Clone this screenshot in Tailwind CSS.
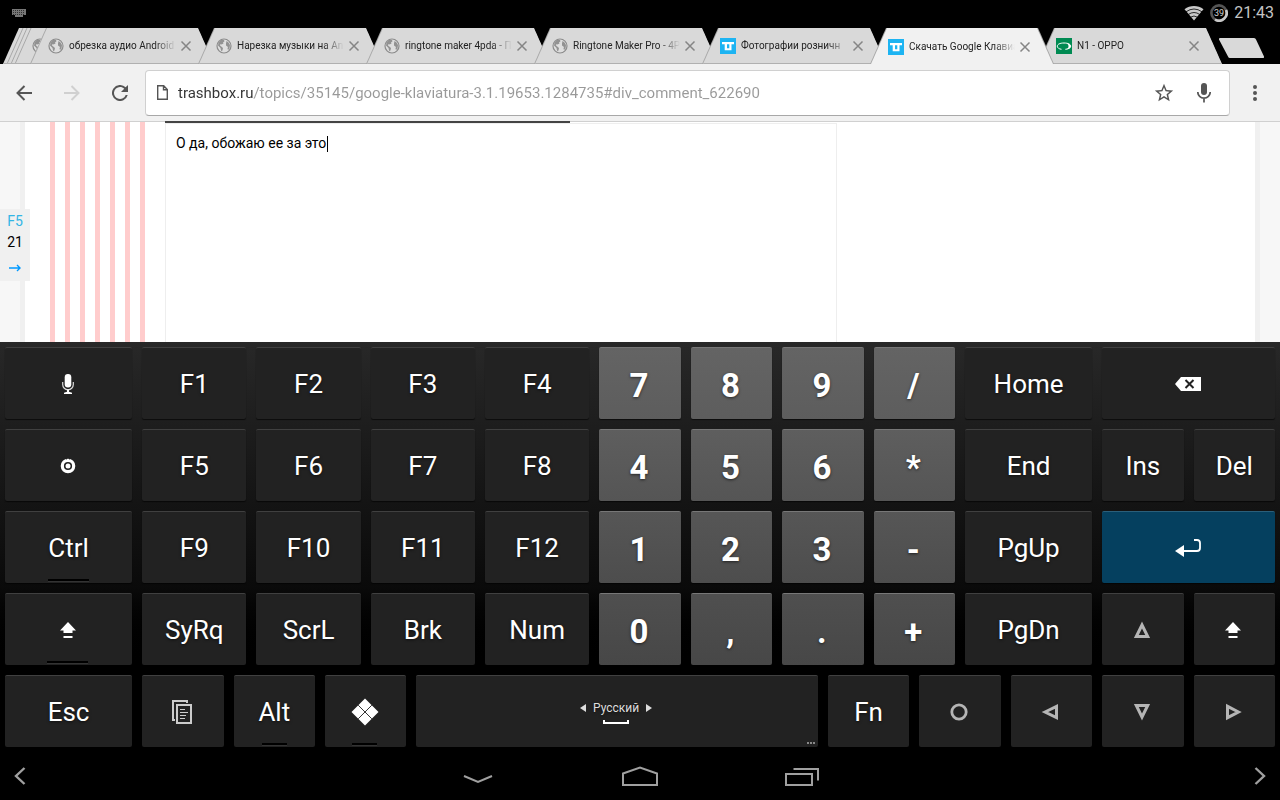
<!DOCTYPE html>
<html lang="ru">
<head>
    <meta charset="UTF-8">
    <meta name="viewport" content="width=device-width, initial-scale=1.0">
    <title>Скачать Google Клавиатура</title>
    <script src="https://cdn.jsdelivr.net/npm/@tailwindcss/browser@4"></script>
</head>
<body class="min-h-screen flex flex-col bg-black font-[Roboto,sans-serif] overflow-x-hidden">
    <!-- Icon sprites -->
    <svg class="hidden">
        <symbol id="globe" viewBox="0 0 16 16">
            <circle cx="8" cy="8" r="7" fill="#dedede" stroke="#8b8b8b" stroke-width="1.200"/>
            <path d="M2.500 4.500 5 1.800 8 2 8.500 3.200 7 4.500 7.500 5.500 5.500 6.500 4.500 6 4 7.500 6.500 9.500 7 10.500 6 13.500 5 12.500 4.500 10 2 7.500zM10.500 3 12.500 4.500 14 7 13.500 10.500 12 12 11.500 10.500 12 9 10 7.500 10 5.500z" fill="#929292"/>
        </symbol>
        <symbol id="trashbox" viewBox="0 0 16 16">
            <path d="M0 0h16v16H0z" fill="#1db4f2"/>
            <path d="M2 4h12v2.300h-2.500v6H4.700V6.300H2zM7 6.300v3.900h2.300V6.300z" fill="#fff" fill-rule="evenodd"/>
        </symbol>
        <symbol id="oppo" viewBox="0 0 16 16">
            <path d="M0 0h16v16H0z" fill="#008a52"/>
            <path d="M5.500 11.300C3 11 1.300 9.800 1.300 8.200 1.300 6.300 4 5 8 5s6.700 1.300 6.700 3.200c0 1.700-2.200 2.900-5.400 3.100" fill="none" stroke="#fff" stroke-width="1"/>
            <path d="M10 5.200c3 .3 4.900 1.300 4.900 3s-1.900 2.800-4.900 3.100c2-.7 2.500-1.900 2.500-3.100s-.5-2.300-2.500-3z" fill="#fff"/>
        </symbol>
        <symbol id="close" viewBox="0 0 12 12"><path d="M1.500 1.500l9 9M10.500 1.500l-9 9" stroke="#858585" stroke-width="1.500"/></symbol>
        <symbol id="key-mic" viewBox="0 0 12 20">
            <rect x="2.700" y="0" width="6.600" height="13.500" rx="3.200" fill="#fff"/>
            <path d="M.7 8v2.500a5.300 5.300 0 0 0 10.600 0V8" fill="none" stroke="#ddd" stroke-width="1.200"/>
            <path d="M5 15.500h2v2.200l3 1V20H2v-1.300l3-1z" fill="#fff"/>
        </symbol>
        <symbol id="key-gear" viewBox="0 0 16 16">
            <circle cx="8" cy="8" r="5.700" fill="none" stroke="#fff" stroke-width="3.200"/>
            <path d="M5.500 0l1 1.500M10.500 0l-1 1.500" stroke="#222" stroke-width=".8"/>
            <circle cx="8" cy="8" r="2.500" fill="#fff"/>
        </symbol>
        <symbol id="key-shift" viewBox="0 0 16 16"><path d="M8 0l8 8.500h-3.500V11h-9V8.500H0zM3.500 14h9v2h-9z" fill="#fff"/></symbol>
        <symbol id="key-menu" viewBox="0 0 20 24">
            <path d="M3 20H1V1h14v2" fill="none" stroke="#ccc" stroke-width="2"/>
            <path d="M5 5h14v18H5z" fill="none" stroke="#ccc" stroke-width="2"/>
            <path d="M8 9.500h5M8 12.500h8M8 15.500h6M8 18.500h5" stroke="#ccc"/>
        </symbol>
        <symbol id="key-meta" viewBox="0 0 28 28">
            <path d="M14 .5 27.500 14 14 27.500.5 14z" fill="#fff"/>
            <path d="M7.200 7.200l13.600 13.600M20.800 7.200 7.200 20.800" stroke="#333" stroke-width="1"/>
        </symbol>
        <symbol id="key-back" viewBox="0 0 26 14">
            <path d="M0 7 6 0h20v14H6z" fill="#fff"/>
            <path d="M10.500 3l8 8M18.500 3l-8 8" stroke="#222" stroke-width="2"/>
        </symbol>
        <symbol id="key-enter" viewBox="0 0 26 18">
            <path d="M0 12l9-6v12z" fill="#fff"/>
            <path d="M8 12h14q3 0 3-3V4q0-3-3-3h-3" fill="none" stroke="#fff" stroke-width="1.800"/>
        </symbol>
        <symbol id="key-circle" viewBox="0 0 18 18"><circle cx="9" cy="9" r="7.200" fill="none" stroke="#b5b5b5" stroke-width="2.800"/></symbol>
        <symbol id="key-up" viewBox="0 0 18 18"><path d="M9 4 14.700 15.500H3.300z" fill="none" stroke="#b5b5b5" stroke-width="3"/></symbol>
        <symbol id="key-down" viewBox="0 0 18 18"><path d="M9 14 14.700 2.500H3.300z" fill="none" stroke="#b5b5b5" stroke-width="3"/></symbol>
        <symbol id="key-left" viewBox="0 0 18 18"><path d="M4 9 15.500 3.300v11.400z" fill="none" stroke="#b5b5b5" stroke-width="3"/></symbol>
        <symbol id="key-right" viewBox="0 0 18 18"><path d="M14.500 9 3.500 3.300v11.400z" fill="none" stroke="#b5b5b5" stroke-width="3"/></symbol>
    </svg>

    <!-- Status bar -->
    <header class="h-7 flex items-start justify-between pt-px pl-3 pr-1.5 text-[#c4c4c4]">
        <svg class="w-[14px] h-[9px] mt-2" viewBox="0 0 14 9">
            <path d="M0 0h14v6h-3v2H3V6H0z" fill="#777"/>
            <path d="M1 1.500h12M1 3.500h12M1 5.500h12" stroke="#333" stroke-dasharray="1 1"/>
        </svg>
        <div class="flex items-center h-6 gap-1.5">
            <svg class="w-5 h-4" viewBox="0 0 20 16">
                <path d="M10 15.500.5 4.200C6 0 14 0 19.500 4.200z" fill="#c8c8c8"/>
                <path d="M2 6.800q8-5.600 16 0M4.200 9.500q5.800-4 11.600 0M6.500 12.200q3.500-2.400 7 0" fill="none" stroke="#000" stroke-width=".8"/>
            </svg>
            <svg class="w-[18px] h-[18px]" viewBox="0 0 18 18">
                <circle cx="9" cy="9" r="7.600" fill="none" stroke="#555" stroke-width="2.600"/>
                <path d="M16 6A7.600 7.600 0 0 1 5 15.500" fill="none" stroke="#c8c8c8" stroke-width="2.600"/>
                <text x="9" y="12" text-anchor="middle" font-size="9" fill="#d0d0d0">39</text>
            </svg>
            <span class="text-base leading-6">21:43</span>
        </div>
    </header>

    <!-- Tab strip -->
    <nav class="h-9 flex items-end">
        <svg class="w-[46px] h-9 shrink-0 -mr-4" viewBox="0 0 46 36">
            <path d="M3 36 19 0h27v36z" fill="#d9d9d9"/>
            <path d="M7 36 23 0M11 36 27 0M15 36 31 0" stroke="#a8a8a8" fill="none"/>
            <path d="M3 35.500h43" stroke="#b0b0b0"/>
            <use href="#globe" x="32" y="10" width="16" height="16"/>
        </svg>
        <ul id="tabs" class="flex flex-1 min-w-0"></ul>
        <button aria-label="Новая вкладка" class="w-[58px] h-9 shrink-0">
            <svg class="w-[58px] h-9 -ml-1" viewBox="0 0 58 36"><path d="M2 10h34q1.500 0 2 1.500l8 17q.5 1.500-1 1.500H12q-1.500 0-2-1.500L1 11.500q-.5-1.500 1-1.500z" fill="#d9d9d9"/></svg>
        </button>
    </nav>

    <!-- Toolbar -->
    <div class="h-[58px] bg-[#f1f1f1] border-b border-[#d0d0d0] flex items-center">
        <button aria-label="Назад" class="w-12 flex justify-center">
            <svg class="w-4 h-4" viewBox="0 0 16 16" fill="none" stroke="#555" stroke-width="2"><path d="M16 8H1.500M8.500 1 1.500 8l7 7"/></svg>
        </button>
        <button aria-label="Вперёд" class="w-12 flex justify-center">
            <svg class="w-4 h-4" viewBox="0 0 16 16" fill="none" stroke="#d0d0d0" stroke-width="2"><path d="M0 8h14.500M7.500 1l7 7-7 7"/></svg>
        </button>
        <button aria-label="Обновить" class="w-12 mr-px flex justify-center">
            <svg class="w-4 h-4" viewBox="0 0 16 16"><path d="M13.650 2.350A8 8 0 1 0 15.730 10h-2.080A6 6 0 1 1 8 2c1.660 0 3.140.69 4.220 1.780L9 7h7V0z" fill="#555"/></svg>
        </button>
        <div class="flex flex-1 items-center h-[46px] bg-white border border-[#d0d0d0] border-b-[#a8a8a8] rounded-sm pl-[11px]">
            <svg class="w-[11px] h-[15px] shrink-0" viewBox="0 0 11 15" fill="none" stroke="#555" stroke-width="1.400"><path d="M.7.700h6L10.300 4.500v9.800H.7zM6.500.700v4h3.800"/></svg>
            <input aria-label="Адрес" type="text" value="trashbox.ru/topics/35145/google-klaviatura-3.1.19653.1284735#div_comment_622690"
                class="flex-1 min-w-0 h-10 pl-[10px] text-[15px] text-transparent bg-clip-text bg-[linear-gradient(to_right,#333_86px,#999_86px)] focus:outline-none">
            <button aria-label="Закладка" class="w-10 flex justify-center">
                <svg class="w-[22px] h-[22px]" viewBox="0 0 24 24"><path d="M22 9.240l-7.190-.62L12 2 9.190 8.630 2 9.240l5.460 4.730L5.820 21 12 17.270 18.180 21l-1.630-7.030zM12 15.400l-3.760 2.270 1-4.280-3.320-2.880 4.380-.38L12 6.100l1.710 4.040 4.380.38-3.320 2.880 1 4.280z" fill="#555"/></svg>
            </button>
            <button aria-label="Голосовой поиск" class="w-10 mr-[5px] flex justify-center">
                <svg class="w-[14px] h-5" viewBox="0 0 14 20"><rect x="4" y="0" width="6" height="12" rx="3" fill="#555"/><path d="M.8 9a6.200 6.200 0 0 0 12.400 0M7 15.200V19.500" fill="none" stroke="#555" stroke-width="1.700"/></svg>
            </button>
        </div>
        <button aria-label="Меню" class="w-[50px] flex justify-center">
            <svg class="w-1 h-4" viewBox="0 0 4 16" fill="#555"><circle cx="2" cy="2" r="2"/><circle cx="2" cy="8" r="2"/><circle cx="2" cy="14" r="2"/></svg>
        </button>
    </div>

    <!-- Page -->
    <main class="relative flex flex-1 min-h-[220px] bg-white border-x-[20px] border-[#f7f7f7]">
        <div class="flex flex-1 border-x-[5px] border-[#f0f0f0] pl-[25px]">
            <!-- Comment nesting -->
            <div class="w-[115px] flex gap-[10px]">
                <i class="w-[5px] bg-[#ffcccc]"></i>
                <i class="w-[5px] bg-[#ffcccc]"></i>
                <i class="w-[5px] bg-[#ffcccc]"></i>
                <i class="w-[5px] bg-[#ffcccc]"></i>
                <i class="w-[5px] bg-[#ffcccc]"></i>
                <i class="w-[5px] bg-[#ffcccc]"></i>
                <i class="w-[5px] bg-[#ffcccc]"></i>
            </div>
            <!-- Comment box -->
            <div class="relative w-[672px] flex">
                <textarea aria-label="Комментарий" class="flex-1 mt-px resize-none border border-b-0 border-[#eee] px-[10px] py-[9px] text-sm leading-5 text-black focus:outline-none">О да, обожаю ее за это</textarea>
                <div class="absolute -top-px left-0 w-[405px] h-0.5 bg-[#444]"></div>
                <div class="absolute top-[14px] left-[162px] w-px h-4 bg-black"></div>
            </div>
        </div>
        <!-- Floating refresh -->
        <aside class="absolute top-[87px] -left-5 w-[30px] h-[72px] bg-[#f0f0f0] flex flex-col items-center text-sm leading-[21px] pt-[2px]">
            <a href="#" class="text-[#33b5e5]">F5</a>
            <span>21</span>
            <a href="#" aria-label="Дальше" class="mt-[11px]">
                <svg class="w-3 h-2" viewBox="0 0 12 8"><path d="M0 4h11M8 1l3 3-3 3" fill="none" stroke="#0099ff" stroke-width="1.400"/></svg>
            </a>
        </aside>
    </main>

    <!-- Keyboard -->
    <section id="keyboard" class="grid grid-cols-56 gap-y-[10px] py-[5px] bg-linear-to-b from-[#282828] via-[#0a0a0a] via-60% to-black to-80%"></section>

    <!-- Navigation bar -->
    <footer class="h-12 flex items-center justify-between px-[14px]">
        <button aria-label="Влево"><svg class="w-3 h-[18px]" viewBox="0 0 12 18"><path d="M10.500 1 2 9l8.500 8" fill="none" stroke="#a0a0a0" stroke-width="2.400"/></svg></button>
        <div class="flex items-center pr-px">
            <button aria-label="Скрыть клавиатуру" class="w-[162px] flex justify-center"><svg class="w-[30px] h-5" viewBox="0 0 30 20"><path d="M1 10l14 6 14-6" fill="none" stroke="#a0a0a0" stroke-width="2"/></svg></button>
            <button aria-label="Домой" class="w-[162px] flex justify-center"><svg class="w-9 h-5" viewBox="0 0 36 20"><path d="M1 7.500 18 1.500l17 6V19H1z" fill="none" stroke="#a0a0a0" stroke-width="2"/></svg></button>
            <button aria-label="Недавние" class="w-[162px] flex justify-center"><svg class="w-[34px] h-5" viewBox="0 0 34 20" fill="none" stroke="#a0a0a0" stroke-width="2"><path d="M1 8h26v11H1zM8.500 3H33v11.500"/></svg></button>
        </div>
        <button aria-label="Вправо"><svg class="w-3 h-[18px]" viewBox="0 0 12 18"><path d="M1.500 1 10 9l-8.500 8" fill="none" stroke="#a0a0a0" stroke-width="2.400"/></svg></button>
    </footer>

    <script>
        const tabs = [
            { icon: 'globe', title: 'обрезка аудио Android' },
            { icon: 'globe', title: 'Нарезка музыки на An' },
            { icon: 'globe', title: 'ringtone maker 4pda - П' },
            { icon: 'globe', title: 'Ringtone Maker Pro - 4P' },
            { icon: 'trashbox', title: 'Фотографии розничн' },
            { icon: 'trashbox', title: 'Скачать Google Клавиа', active: true },
            { icon: 'oppo', title: 'N1 - OPPO' },
        ];

        const slant = '[clip-path:polygon(16px_0,calc(100%-16px)_0,100%_100%,0_100%)]';

        document.getElementById('tabs').innerHTML = tabs.map((tab, i) => `
            <li class="flex-1 min-w-0 h-9 ${i ? '-ml-4' : ''} ${tab.active ? 'z-10' : ''} bg-[#a8a8a8] ${slant}">
                <div class="h-full ml-px ${tab.active ? 'mr-px bg-[#f1f1f1]' : 'bg-[#d9d9d9] border-b border-[#b0b0b0]'} ${slant} flex items-center pt-px pl-[17px] pr-[22px]">
                    <svg class="w-4 h-4 shrink-0"><use href="#${tab.icon}"/></svg>
                    <a href="#" class="flex-1 min-w-0 ml-[5px] mr-1 overflow-hidden whitespace-nowrap text-[10px] leading-4 text-[#222] [mask-image:linear-gradient(to_right,#000_80%,transparent)]">${tab.title}</a>
                    <button aria-label="Закрыть" class="shrink-0"><svg class="w-3 h-3"><use href="#close"/></svg></button>
                </div>
            </li>`).join('');

        // span: width in quarter units, the row is 56 wide
        const spans = { 4: 'col-span-4', 5: 'col-span-5', 6: 'col-span-6', 8: 'col-span-8', 18: 'col-span-18' };
        const numRows = ['bg-linear-to-b from-[#646464] to-[#5d5d5d]', 'bg-linear-to-b from-[#5e5e5e] to-[#555]', 'bg-linear-to-b from-[#565656] to-[#4d4d4d]', 'bg-linear-to-b from-[#4f4f4f] to-[#474747]'];
        const icons = {
            mic: 'w-3 h-5', gear: 'w-4 h-4', shift: 'w-4 h-4', menu: 'w-5 h-6', meta: 'w-7 h-7', back: 'w-[26px] h-[14px]',
            enter: 'w-[26px] h-[18px]', circle: 'w-[18px] h-[18px]', up: 'w-[18px] h-[18px]', down: 'w-[18px] h-[18px]',
            left: 'w-[18px] h-[18px]', right: 'w-[18px] h-[18px]',
        };
        const rows = [
            [['@mic', 6], ['F1', 5], ['F2', 5], ['F3', 5], ['F4', 5], ['7', 4, 'num'], ['8', 4, 'num'], ['9', 4, 'num'], ['/', 4, 'num'], ['Home', 6], ['@back', 8]],
            [['@gear', 6], ['F5', 5], ['F6', 5], ['F7', 5], ['F8', 5], ['4', 4, 'num'], ['5', 4, 'num'], ['6', 4, 'num'], ['*', 4, 'num'], ['End', 6], ['Ins', 4], ['Del', 4]],
            [['Ctrl', 6, 'lock'], ['F9', 5], ['F10', 5], ['F11', 5], ['F12', 5], ['1', 4, 'num'], ['2', 4, 'num'], ['3', 4, 'num'], ['-', 4, 'num'], ['PgUp', 6], ['@enter', 8, 'enter']],
            [['@shift', 6, 'lock'], ['SyRq', 5], ['ScrL', 5], ['Brk', 5], ['Num', 5], ['0', 4, 'num'], [',', 4, 'num'], ['.', 4, 'num'], ['+', 4, 'num'], ['PgDn', 6], ['@up', 4], ['@shift', 4]],
            [['Esc', 6], ['@menu', 4], ['Alt', 4, 'lock'], ['@meta', 4, 'lock'], ['', 18, 'space'], ['Fn', 4], ['@circle', 4], ['@left', 4], ['@down', 4], ['@right', 4]],
        ];

        const space = `
            <span class="flex flex-col items-center gap-1">
                <span class="flex items-center gap-[7px] text-xs leading-4 text-[#ddd]">
                    <svg class="w-1.5 h-2" viewBox="0 0 6 8"><path d="M6 0v8L0 4z" fill="#ddd"/></svg>
                    Русский
                    <svg class="w-1.5 h-2" viewBox="0 0 6 8"><path d="M0 0v8l6-4z" fill="#ddd"/></svg>
                </span>
                <span class="w-[26px] h-1 border-2 border-t-0 border-white"></span>
            </span>
            <svg class="absolute right-[3px] bottom-[3px] w-2 h-0.5" viewBox="0 0 8 2"><path d="M0 0h2v2H0zM3 0h2v2H3zM6 0h2v2H6z" fill="#888"/></svg>`;

        function keyFace(label, type) {
            if (type === 'space') return space;
            if (label[0] === '@') {
                const name = label.slice(1);
                return `<svg class="${icons[name]}"><use href="#key-${name}"/></svg>`;
            }
            return label;
        }

        document.getElementById('keyboard').innerHTML = rows.map((row, r) => row.map(([label, span, type]) => {
            let look = 'bg-[#222] border-[#404040] text-[26px] pt-px';
            if (label[0] === '@' || type === 'space') look = 'bg-[#222] border-[#404040] pt-px pr-0.5';
            if (type === 'num') look = numRows[r] + ' border-[#777] text-[33px] font-bold pt-1 pr-0.5';
            if (type === 'enter') look = 'bg-[#05405f] border-[#2b5f7a] pr-0.5';
            const lock = type === 'lock' ? `<i class="absolute bottom-px ${span === 6 ? 'w-[41px]' : 'w-[25px]'} h-[3px] bg-black border-b border-[#333]"></i>` : '';
            return `<button class="${spans[span]} ${look} relative h-[72px] mx-[5px] flex items-center justify-center rounded-xs border-t text-white shadow-[0_1px_1px_rgba(0,0,0,0.6)] text-shadow-[0_1px_3px_rgba(0,0,0,0.6)]">${keyFace(label, type)}${lock}</button>`;
        }).join('')).join('');
    </script>
</body>
</html>
